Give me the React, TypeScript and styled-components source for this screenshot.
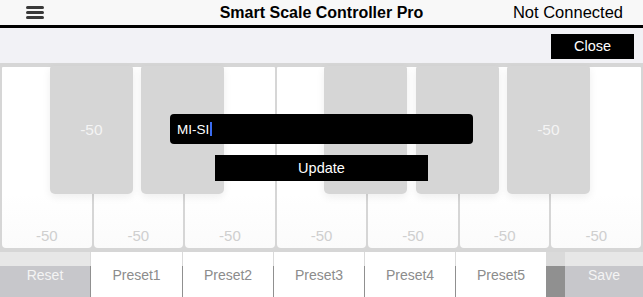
import React, { useState } from 'react'
import styled, { createGlobalStyle } from 'styled-components'

const GlobalStyle = createGlobalStyle`
  html, body {
    margin: 0;
    padding: 0;
    background: #d6d6d6;
    font-family: "Liberation Sans", Arial, sans-serif;
  }
`

const Page = styled.div`
  width: 643px;
  height: 297px;
  overflow: hidden;
  display: flex;
  flex-direction: column;
`

const Header = styled.div`
  height: 25px;
  flex: none;
  display: grid;
  grid-template-columns: 1fr auto 1fr;
  align-items: center;
  background: #f8f8f8;
  border-bottom: 3px solid #000;
`

const MenuButton = styled.div`
  padding-left: 26px;
  display: flex;
  flex-direction: column;
  gap: 2px;
`

const MenuBar = styled.span`
  display: block;
  width: 18px;
  height: 3px;
  border-radius: 2px;
  background: #3a3a3a;
`

const Title = styled.div`
  font-size: 16px;
  font-weight: bold;
  color: #000;
`

const Status = styled.div`
  justify-self: end;
  padding-right: 20px;
  font-size: 16.5px;
  color: #000;
`

const SubBar = styled.div`
  height: 35px;
  flex: none;
  display: flex;
  justify-content: flex-end;
  align-items: center;
  padding-right: 9px;
  background: #f2f2f6;
`

const DarkButton = styled.button`
  border: none;
  background: #000;
  color: #fff;
  font-family: inherit;
  font-size: 14.5px;
  padding: 0;
  cursor: pointer;
`

const CloseButton = styled(DarkButton)`
  width: 83px;
  height: 25px;
  margin-top: 1px;
`

const Keyboard = styled.div`
  position: relative;
  height: 189px;
  flex: none;
  display: flex;
  gap: 2px;
  padding: 4px 2px;
  box-sizing: border-box;
  background: #d6d6d6;
`

const WhiteKey = styled.div`
  flex: 1;
  display: flex;
  align-items: flex-end;
  justify-content: center;
  padding-bottom: 4px;
  box-sizing: border-box;
  border-radius: 1px 1px 4px 4px;
  background: linear-gradient(#ffffff 70%, #fbfbfb);
  color: #cfcfcf;
  font-size: 15px;
`

const BlackKey = styled.div<{ $slot: number }>`
  position: absolute;
  top: 3px;
  left: ${(p) => p.$slot * 91.4 - 41.5}px;
  width: 83px;
  height: 128px;
  display: flex;
  align-items: center;
  justify-content: center;
  border-radius: 3px 3px 5px 5px;
  background: #d6d6d6;
  box-shadow: 0 3px 8px rgba(0, 0, 0, 0.07);
  color: #f4f4f4;
  font-size: 15.5px;
`

const NameInput = styled.div`
  position: absolute;
  left: 170px;
  top: 51px;
  width: 303px;
  height: 30px;
  display: flex;
  align-items: center;
  padding-left: 7px;
  box-sizing: border-box;
  border-radius: 4px;
  background: #000;
  color: #fff;
  font-size: 13.5px;
`

const Caret = styled.span`
  display: inline-block;
  width: 2px;
  height: 14px;
  margin-left: 1px;
  background: #3b6cf0;
`

const UpdateButton = styled(DarkButton)`
  position: absolute;
  left: 215px;
  top: 92px;
  width: 213px;
  height: 26px;
`

const BottomBar = styled.div`
  flex: 1;
  display: flex;
  gap: 1px;
  background: linear-gradient(#dadada 14px, #909090 14px);
`

const BarButton = styled.div<{ $width: number; $muted?: boolean }>`
  width: ${(p) => p.$width}px;
  flex: none;
  display: flex;
  align-items: flex-start;
  justify-content: center;
  padding-top: 15px;
  box-sizing: border-box;
  font-size: 14px;
  color: ${(p) => (p.$muted ? '#f4f4f4' : '#8c8c8c')};
  background: ${(p) =>
    p.$muted ? 'linear-gradient(#e7e7e7 14px, #c7c7cb 14px)' : '#fff'};
`

const Spacer = styled.div`
  flex: 1;
`

const blackSlots = [1, 2, 4, 5, 6]
const presets = ['Preset1', 'Preset2', 'Preset3', 'Preset4', 'Preset5']

const App: React.FC = () => {
  const [name] = useState('MI-SI')

  return (
    <Page>
      <GlobalStyle />
      <Header>
        <MenuButton>
          <MenuBar />
          <MenuBar />
          <MenuBar />
        </MenuButton>
        <Title>Smart Scale Controller Pro</Title>
        <Status>Not Connected</Status>
      </Header>

      <SubBar>
        <CloseButton>Close</CloseButton>
      </SubBar>

      <Keyboard>
        {Array.from({ length: 7 }).map((_, i) => (
          <WhiteKey key={i}>-50</WhiteKey>
        ))}
        {blackSlots.map((slot) => (
          <BlackKey key={slot} $slot={slot}>
            {slot === 1 || slot === 6 ? '-50' : ''}
          </BlackKey>
        ))}
        <NameInput>
          {name}
          <Caret />
        </NameInput>
        <UpdateButton>Update</UpdateButton>
      </Keyboard>

      <BottomBar>
        <BarButton $width={90} $muted>
          Reset
        </BarButton>
        {presets.map((preset) => (
          <BarButton key={preset} $width={preset === 'Preset1' ? 91 : 90}>
            {preset}
          </BarButton>
        ))}
        <Spacer />
        <BarButton $width={78} $muted>
          Save
        </BarButton>
      </BottomBar>
    </Page>
  )
}

export default App
